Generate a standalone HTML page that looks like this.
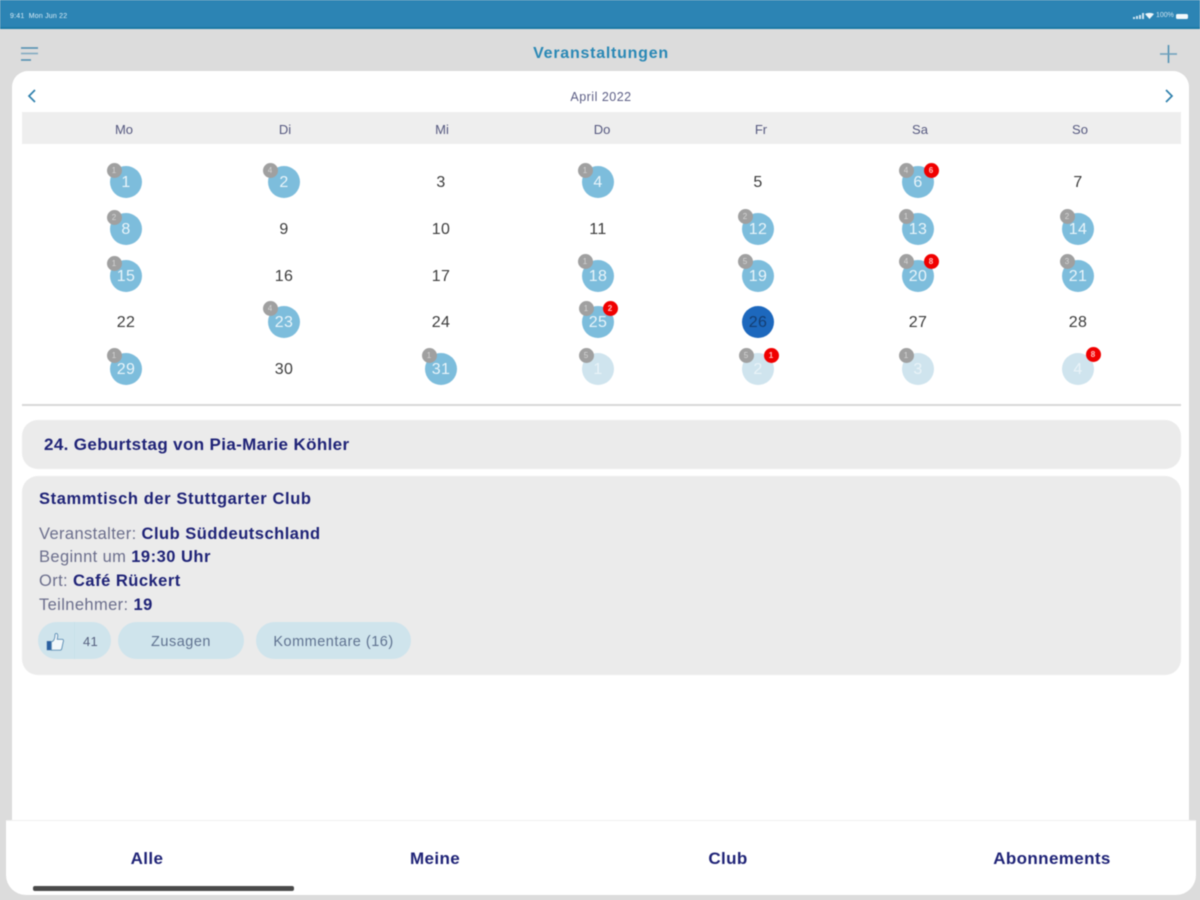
<!DOCTYPE html>
<html><head><meta charset="utf-8"><style>
html,body{margin:0;padding:0;width:1200px;height:900px;overflow:hidden;background:#dcdcdc}
body{font-family:"Liberation Sans",sans-serif;position:relative}
#p{position:absolute;left:0;top:0;width:1200px;height:900px;filter:blur(.6px);overflow:hidden}
#p div{position:absolute}
.t{white-space:nowrap;line-height:20px;height:20px}
.c{transform:translateX(-50%);text-align:center}
.d{width:32px;height:32px;border-radius:50%;text-align:center;line-height:34px;font-size:16px;color:#3a3a3a;margin:-16px 0 0 -16px;letter-spacing:.4px}
.b{background:#7dbddc;color:#e8f4fa}
.f{background:#cfe4ee;color:#e9f3f8}
.n{color:#3c3c3c}
.g,.r{width:15px;height:15px;border-radius:50%;text-align:center;line-height:15px;font-size:8px;margin:-7.5px 0 0 -7.5px}
.g{background:#a0a0a0;color:#d5d5d5}
.r{background:#f00000;color:#ffc0c0;font-weight:bold}
.w{color:#55587f;font-size:13px;transform:translateX(-50%);top:119.5px;line-height:20px}
.bold{font-weight:bold;color:#1f2377}
.lab{font-size:16.5px;color:#6b6e8c;letter-spacing:.38px;left:39px}
.lab b{color:#1f2377;letter-spacing:.5px;font-size:16.5px}
.tab{font-size:17px;font-weight:bold;color:#1f2377;top:849px;letter-spacing:.38px;line-height:20px;transform:translateX(-50%);white-space:nowrap}
.pill{background:#cfe4ec;border-radius:19px;height:37px;top:622px;text-align:center;line-height:41px;font-size:14.5px;color:#5f7290;letter-spacing:.5px}
</style></head><body><div id="p">
<div style="left:0;top:0;width:1200px;height:27px;background:#2c84b4;border-bottom:2px solid #1c7aa6"></div>
<div class="t" style="left:10px;top:7px;font-size:7px;color:#d9ecf6;letter-spacing:.2px">9:41&nbsp; Mon Jun 22</div>
<svg style="position:absolute;left:1132px;top:12px" width="58" height="10" viewBox="0 0 58 10"><path d="M1 7h2V5H1zM4 7h2V4H4zM7 7h2V3H7zM10 7h2V1h-2z" fill="#cfe4f0"/><path d="M13 2c3-1.500 6-1.500 9 0l-4.500 5z" fill="#eef6fa"/><rect x="44" y="2" width="12" height="5" rx="1.500" fill="#f2f8fb"/></svg>
<div class="t" style="left:1156px;top:6px;font-size:7px;color:#cfe4f0">100%</div>

<svg style="position:absolute;left:20px;top:46px" width="20" height="17" viewBox="0 0 20 17"><path d="M1 2h17" stroke="#4d8cb0" stroke-width="1.500"/><path d="M1 7.500h17" stroke="#7fa8c0" stroke-width="1.500"/><path d="M1 14h10" stroke="#4d8cb0" stroke-width="1.500"/></svg>
<div class="t c" style="left:601px;top:43.500px;font-size:16px;font-weight:bold;color:#2a88b5;letter-spacing:.75px">Veranstaltungen</div>
<svg style="position:absolute;left:1159px;top:44px" width="19" height="20" viewBox="0 0 19 20"><path d="M9.500 1v18" stroke="#4a8db2" stroke-width="1.500"/><path d="M1 10h17" stroke="#6c9fbc" stroke-width="1.500"/></svg>

<div style="left:12px;top:71px;width:1177px;height:790px;background:#fff;border-radius:16px 16px 0 0"></div>

<svg style="position:absolute;left:26px;top:88px" width="12" height="16" viewBox="0 0 12 16"><path d="M9 2L3 8l6 6" fill="none" stroke="#2f80ad" stroke-width="1.700"/></svg>
<div class="t c" style="left:601px;top:87px;font-size:12.5px;color:#5d5f86;letter-spacing:.5px">April 2022</div>
<svg style="position:absolute;left:1163px;top:88px" width="12" height="16" viewBox="0 0 12 16"><path d="M3 2l6 6-6 6" fill="none" stroke="#2f80ad" stroke-width="1.700"/></svg>

<div style="left:22px;top:112px;width:1159px;height:32px;background:#eeeeee"></div>
<div class="w" style="left:124px">Mo</div><div class="w" style="left:285px">Di</div><div class="w" style="left:442px">Mi</div><div class="w" style="left:602px">Do</div><div class="w" style="left:761px">Fr</div><div class="w" style="left:920px">Sa</div><div class="w" style="left:1080px">So</div>

<!-- row 1 -->
<div class="d b" style="left:126px;top:182px">1</div><div class="g" style="left:114px;top:170px">1</div>
<div class="d b" style="left:284px;top:182px">2</div><div class="g" style="left:270px;top:170px">4</div>
<div class="d n" style="left:441px;top:182px">3</div>
<div class="d b" style="left:598px;top:182px">4</div><div class="g" style="left:585px;top:170px">1</div>
<div class="d n" style="left:758px;top:182px">5</div>
<div class="d b" style="left:918px;top:182px">6</div><div class="g" style="left:906px;top:170px">4</div><div class="r" style="left:931px;top:170px">6</div>
<div class="d n" style="left:1078px;top:182px">7</div>
<!-- row 2 -->
<div class="d b" style="left:126px;top:229px">8</div><div class="g" style="left:114px;top:217px">2</div>
<div class="d n" style="left:284px;top:229px">9</div>
<div class="d n" style="left:441px;top:229px">10</div>
<div class="d n" style="left:598px;top:229px">11</div>
<div class="d b" style="left:758px;top:229px">12</div><div class="g" style="left:745px;top:216px">2</div>
<div class="d b" style="left:918px;top:229px">13</div><div class="g" style="left:906px;top:216px">1</div>
<div class="d b" style="left:1078px;top:229px">14</div><div class="g" style="left:1067px;top:216px">2</div>
<!-- row 3 -->
<div class="d b" style="left:126px;top:276px">15</div><div class="g" style="left:114px;top:263px">1</div>
<div class="d n" style="left:284px;top:276px">16</div>
<div class="d n" style="left:441px;top:276px">17</div>
<div class="d b" style="left:598px;top:276px">18</div><div class="g" style="left:585px;top:261px">1</div>
<div class="d b" style="left:758px;top:276px">19</div><div class="g" style="left:745px;top:261px">5</div>
<div class="d b" style="left:918px;top:276px">20</div><div class="g" style="left:906px;top:261px">4</div><div class="r" style="left:931px;top:261px">8</div>
<div class="d b" style="left:1078px;top:276px">21</div><div class="g" style="left:1067px;top:261px">3</div>
<!-- row 4 -->
<div class="d n" style="left:126px;top:322px">22</div>
<div class="d b" style="left:284px;top:322px">23</div><div class="g" style="left:270px;top:308px">4</div>
<div class="d n" style="left:441px;top:322px">24</div>
<div class="d b" style="left:598px;top:322px">25</div><div class="g" style="left:586px;top:308px">1</div><div class="r" style="left:610px;top:308px">2</div>
<div class="d" style="left:758px;top:322px;background:#1d68bd;color:#143e72">26</div>
<div class="d n" style="left:918px;top:322px">27</div>
<div class="d n" style="left:1078px;top:322px">28</div>
<!-- row 5 -->
<div class="d b" style="left:126px;top:369px">29</div><div class="g" style="left:114px;top:355px">1</div>
<div class="d n" style="left:284px;top:369px">30</div>
<div class="d b" style="left:441px;top:369px">31</div><div class="g" style="left:429px;top:355px">1</div>
<div class="d f" style="left:598px;top:369px">1</div><div class="g" style="left:586px;top:355px">5</div>
<div class="d f" style="left:758px;top:369px">2</div><div class="g" style="left:746px;top:355px">5</div><div class="r" style="left:771px;top:355px">1</div>
<div class="d f" style="left:918px;top:369px">3</div><div class="g" style="left:906px;top:355px">1</div>
<div class="d f" style="left:1078px;top:369px">4</div><div class="r" style="left:1093px;top:354px">8</div>

<div style="left:22px;top:404px;width:1159px;height:2px;background:#d8d8d8"></div>

<div style="left:22px;top:420px;width:1159px;height:49px;background:#ebebeb;border-radius:16px"></div>
<div class="t bold" style="left:44px;top:435px;font-size:17px;letter-spacing:.36px">24. Geburtstag von Pia-Marie Köhler</div>

<div style="left:22px;top:476px;width:1159px;height:199px;background:#ebebeb;border-radius:16px"></div>
<div class="t bold" style="left:39px;top:489px;font-size:16.5px;letter-spacing:.6px">Stammtisch der Stuttgarter Club</div>
<div class="t lab" style="top:524px">Veranstalter: <b>Club Süddeutschland</b></div>
<div class="t lab" style="top:547px">Beginnt um <b>19:30 Uhr</b></div>
<div class="t lab" style="top:571px">Ort: <b>Café Rückert</b></div>
<div class="t lab" style="top:595px">Teilnehmer: <b>19</b></div>

<div class="pill" style="left:38px;width:73px"></div>
<div style="left:74px;top:622px;width:1px;height:37px;background:#c9e0e9"></div>
<svg style="position:absolute;left:45px;top:632px" width="20" height="20" viewBox="0 0 22 22"><rect x="2" y="10" width="5" height="10" fill="#2a5fa0"/><path d="M7 11c3-1 4-4 4-8 0-2 3-2 3 1 0 2-.5 3-.5 4H19c1.500 0 1.500 2 1 3l-1.500 7c-.2 1-1 2-2 2H7z" fill="#f2f7fa" stroke="#5b8db4" stroke-width="1"/></svg>
<div class="t" style="left:83px;top:632px;font-size:13px;color:#55607f;letter-spacing:.3px">41</div>
<div class="pill" style="left:118px;width:126px">Zusagen</div>
<div class="pill" style="left:256px;width:155px">Kommentare (16)</div>

<div style="left:6px;top:820px;width:1190px;height:75px;background:#fff;border-radius:0 0 20px 20px;border-top:1px solid #f0f0f0;box-sizing:border-box"></div>
<div class="tab" style="left:147px">Alle</div>
<div class="tab" style="left:435px">Meine</div>
<div class="tab" style="left:728px">Club</div>
<div class="tab" style="left:1052px">Abonnements</div>
<div style="left:33px;top:886px;width:261px;height:5px;background:#4a4a4a;border-radius:2px"></div>
</div></body></html>
